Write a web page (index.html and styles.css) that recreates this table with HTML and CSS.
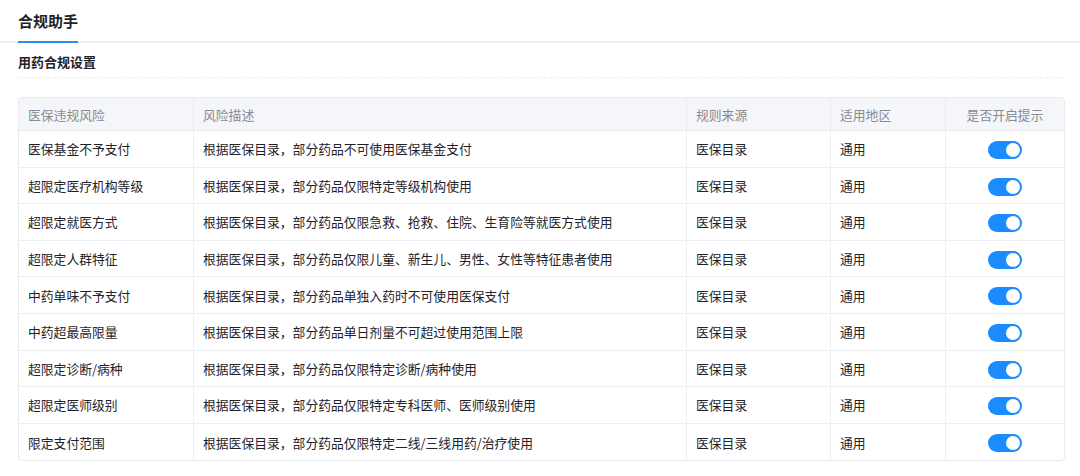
FILE: index.html
```html
<!DOCTYPE html>
<html lang="zh-CN">
<head>
<meta charset="utf-8">
<title>合规助手</title>
<link rel="stylesheet" href="styles.css">
</head>
<body>
<div class="tabbar">
  <div class="tab">合规助手</div>
</div>
<div class="content">
  <div class="section-title">用药合规设置</div>
  <table class="grid">
    <colgroup>
      <col class="c1"><col class="c2"><col class="c3"><col class="c4"><col class="c5">
    </colgroup>
    <thead>
      <tr><th>医保违规风险</th><th>风险描述</th><th>规则来源</th><th>适用地区</th><th class="center">是否开启提示</th></tr>
    </thead>
    <tbody>
      <tr><td>医保基金不予支付</td><td>根据医保目录，部分药品不可使用医保基金支付</td><td>医保目录</td><td>通用</td><td class="center"><span class="switch"><span class="knob"></span></span></td></tr>
      <tr><td>超限定医疗机构等级</td><td>根据医保目录，部分药品仅限特定等级机构使用</td><td>医保目录</td><td>通用</td><td class="center"><span class="switch"><span class="knob"></span></span></td></tr>
      <tr><td>超限定就医方式</td><td>根据医保目录，部分药品仅限急救、抢救、住院、生育险等就医方式使用</td><td>医保目录</td><td>通用</td><td class="center"><span class="switch"><span class="knob"></span></span></td></tr>
      <tr><td>超限定人群特征</td><td>根据医保目录，部分药品仅限儿童、新生儿、男性、女性等特征患者使用</td><td>医保目录</td><td>通用</td><td class="center"><span class="switch"><span class="knob"></span></span></td></tr>
      <tr><td>中药单味不予支付</td><td>根据医保目录，部分药品单独入药时不可使用医保支付</td><td>医保目录</td><td>通用</td><td class="center"><span class="switch"><span class="knob"></span></span></td></tr>
      <tr><td>中药超最高限量</td><td>根据医保目录，部分药品单日剂量不可超过使用范围上限</td><td>医保目录</td><td>通用</td><td class="center"><span class="switch"><span class="knob"></span></span></td></tr>
      <tr><td>超限定诊断/病种</td><td>根据医保目录，部分药品仅限特定诊断/病种使用</td><td>医保目录</td><td>通用</td><td class="center"><span class="switch"><span class="knob"></span></span></td></tr>
      <tr><td>超限定医师级别</td><td>根据医保目录，部分药品仅限特定专科医师、医师级别使用</td><td>医保目录</td><td>通用</td><td class="center"><span class="switch"><span class="knob"></span></span></td></tr>
      <tr><td>限定支付范围</td><td>根据医保目录，部分药品仅限特定二线/三线用药/治疗使用</td><td>医保目录</td><td>通用</td><td class="center"><span class="switch"><span class="knob"></span></span></td></tr>
    </tbody>
  </table>
</div>
</body>
</html>
```

FILE: styles.css
```css
* { box-sizing: border-box; }
html, body {
  margin: 0;
  padding: 0;
  background: #ffffff;
  font-family: "Noto Sans CJK SC", "Noto Sans", sans-serif;
  color: #1f2329;
}
.tabbar {
  display: flex;
  padding-left: 18px;
  height: 43px;
  border-bottom: 2px solid #eef0f3;
}
.tab {
  height: 43px;
  line-height: 41px;
  font-size: 15px;
  font-weight: 600;
  color: #1f2329;
  border-bottom: 2px solid #2b8ff0;
  margin-bottom: -2px;
}
.content {
  padding: 0 17px 0 18px;
}
.section-title {
  height: 35px;
  line-height: 35px;
  padding-top: 1px;
  font-size: 13px;
  font-weight: 600;
  color: #1f2329;
  border-bottom: 1px dashed #eceef1;
  margin-bottom: 19px;
}
.grid {
  width: 1045px;
  border-collapse: separate;
  border-spacing: 0;
  border: 1px solid #e8eaee;
  border-radius: 4px;
  table-layout: fixed;
  font-size: 12.8px;
}
.c1 { width: 175px; }
.c2 { width: 493px; }
.c3 { width: 144px; }
.c4 { width: 115px; }
.c5 { width: 118px; }
.grid th {
  height: 33px;
  background: #f5f6f9;
  color: #868b94;
  font-weight: 400;
  text-align: left;
  padding: 0 9px;
  border-right: 1px solid #e8eaee;
  border-bottom: 1px solid #e8eaee;
}
.grid th:first-child { border-top-left-radius: 4px; }
.grid th:last-child { border-top-right-radius: 4px; }
.grid td {
  height: 36.6px;
  padding: 0 9px;
  color: #1f2329;
  border-right: 1px solid #eceef1;
  border-bottom: 1px solid #eceef1;
  white-space: nowrap;
}
.grid tr > *:last-child { border-right: none; }
.grid tbody tr:last-child td { border-bottom: none; }
.grid .center { text-align: center; }
.switch {
  display: inline-flex;
  align-items: center;
  justify-content: flex-end;
  width: 34px;
  height: 18px;
  border-radius: 9px;
  background: #1a8cff;
  padding: 2px;
  vertical-align: middle;
}
.knob {
  width: 14px;
  height: 14px;
  border-radius: 50%;
  background: #ffffff;
}
```
